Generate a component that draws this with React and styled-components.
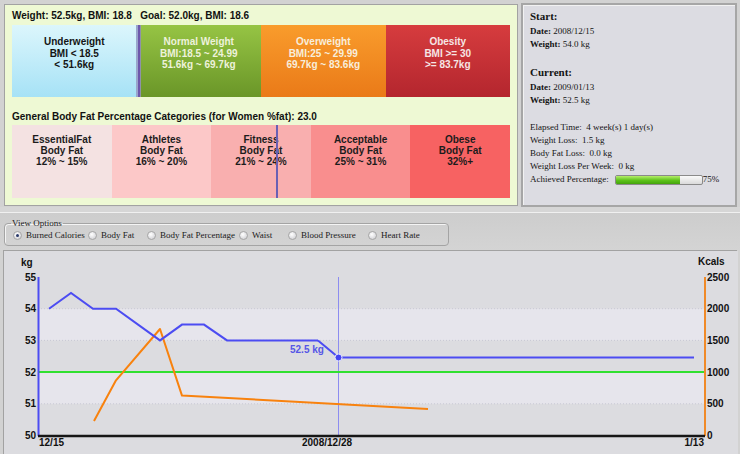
import React from 'react';
import styled, { createGlobalStyle } from 'styled-components';

const GlobalStyle = createGlobalStyle`
  body {
    margin: 0;
    background: #d2d2d2;
  }
`;

const Screen = styled.div`
  width: 740px;
  height: 454px;
  overflow: hidden;
  display: flex;
  flex-direction: column;
  background: #d2d2d2;
  font-family: 'Liberation Sans', Arial, sans-serif;
`;

const TopRow = styled.div`
  display: flex;
  gap: 3px;
  height: 207px;
  padding: 3px 3px 0 4px;
  box-sizing: border-box;
`;

const BmiPanel = styled.div`
  width: 514px;
  height: 202px;
  margin-top: 1px;
  box-sizing: border-box;
  border: 1px solid #a2a2a2;
  background: #eef9d4;
  padding: 5px 7px 0 7px;
  display: flex;
  flex-direction: column;
`;

const PanelTitle = styled.div`
  font-size: 10px;
  font-weight: bold;
  line-height: 12px;
  color: #111;
  white-space: pre;
  margin-top: ${p => p.$top || 0}px;
`;

const ScaleBar = styled.div`
  position: relative;
  display: flex;
  width: 498px;
  height: ${p => p.$height}px;
  margin-top: ${p => p.$top}px;
`;

const Segment = styled.div`
  flex: 1;
  background: linear-gradient(to bottom, ${p => p.$from}, ${p => p.$to});
  color: ${p => p.$color};
  text-align: center;
  font-size: 10px;
  font-weight: bold;
  line-height: ${p => p.$lh}px;
  padding-top: ${p => p.$pad}px;
  box-sizing: border-box;
`;

const Marker = styled.div`
  position: absolute;
  top: 0;
  bottom: 0;
  left: ${p => p.$left}px;
  width: ${p => p.$width}px;
  background: ${p => p.$color};
`;

const StatsPanel = styled.div`
  width: 216px;
  height: 204px;
  box-sizing: border-box;
  border: 2px solid #a6a6a6;
  box-shadow: inset 1px 1px 0 #f2f2f2;
  background: #dcdce2;
  padding: 4px 0 0 7px;
  font-family: 'Liberation Serif', 'Times New Roman', serif;
  font-size: 9px;
  color: #141414;
`;

const StatHead = styled.div`
  font-size: 11px;
  font-weight: bold;
  line-height: 14px;
  margin-top: ${p => p.$top || 0}px;
`;

const StatLine = styled.div`
  display: flex;
  align-items: center;
  line-height: 13px;
  height: 13px;
  white-space: pre;
  margin-top: ${p => p.$top || 0}px;
  b {
    font-weight: bold;
  }
`;

const Progress = styled.div`
  width: 86px;
  height: 8px;
  margin-left: 6px;
  border: 1px solid #8a8a8a;
  border-radius: 2px;
  background: linear-gradient(to bottom, #fafafa, #dadada);
  overflow: hidden;
`;

const ProgressFill = styled.div`
  height: 100%;
  background: linear-gradient(to bottom, #b6ee6a, #5cc21a 55%, #44a40c);
`;

const MidBand = styled.div`
  height: 43px;
  box-sizing: border-box;
  padding: 11px 0 0 4px;
  background: linear-gradient(to bottom, #d6d6d6 0, #d6d6d6 5px, #f0f0f0 5px, #f0f0f0 6px, #cdcdcd 6px, #d4d4d4 100%);
`;

const Options = styled.fieldset`
  width: 445px;
  box-sizing: border-box;
  margin: 0;
  padding: 1px 0 4px 8px;
  border: 1px solid #a4a4a4;
  border-radius: 4px;
  box-shadow: inset 1px 1px 0 #f4f4f4;
  display: flex;
  font-family: 'Liberation Serif', 'Times New Roman', serif;
  font-size: 9px;
  color: #1a1a1a;
`;

const OptionsLegend = styled.legend`
  padding: 0 1px;
  margin-left: -2px;
  line-height: 10px;
`;

const RadioItem = styled.label`
  display: flex;
  align-items: center;
  gap: 4px;
  width: ${p => p.$width}px;
  height: 12px;
  line-height: 12px;
  white-space: nowrap;
`;

const RadioDot = styled.span`
  position: relative;
  width: 9px;
  height: 9px;
  box-sizing: border-box;
  border-radius: 50%;
  border: 1px solid #a6a6a6;
  background: radial-gradient(circle at 40% 35%, #ffffff, #d4d4d8 80%);
  &::after {
    content: '';
    display: ${p => (p.$checked ? 'block' : 'none')};
    position: absolute;
    left: 2px;
    top: 2px;
    width: 3px;
    height: 3px;
    border-radius: 50%;
    background: #2a3a6a;
  }
`;

const ChartPanel = styled.div`
  height: 204px;
  margin: 0 3px;
  box-sizing: border-box;
  border: 1px solid #a2a2a2;
  border-bottom: none;
  background: #dcdce0;
  svg {
    display: block;
  }
  text {
    font-family: 'Liberation Sans', Arial, sans-serif;
    font-size: 10px;
    font-weight: bold;
  }
`;

const bmiSegments = [
  { lines: ['Underweight', 'BMI < 18.5', '< 51.6kg'], from: '#dcf6fc', to: '#a6e2f6', color: '#141414' },
  { lines: ['Normal Weight', 'BMI:18.5 ~ 24.99', '51.6kg ~ 69.7kg'], from: '#96c444', to: '#6a9628', color: '#eef2dc' },
  { lines: ['Overweight', 'BMI:25 ~ 29.99', '69.7kg ~ 83.6kg'], from: '#f99c2c', to: '#ea7a18', color: '#f8eedc' },
  { lines: ['Obesity', 'BMI >= 30', '>= 83.7kg'], from: '#d63c3e', to: '#b4262e', color: '#f6e6e6' },
];

const fatSegments = [
  { lines: ['EssentialFat', 'Body Fat', '12% ~ 15%'], bg: '#f4e2e2' },
  { lines: ['Athletes', 'Body Fat', '16% ~ 20%'], bg: '#fcc8c8' },
  { lines: ['Fitness', 'Body Fat', '21% ~ 24%'], bg: '#f9afaf' },
  { lines: ['Acceptable', 'Body Fat', '25% ~ 31%'], bg: '#f98e8e' },
  { lines: ['Obese', 'Body Fat', '32%+'], bg: '#f76262' },
];

const viewOptions = [
  { label: 'Burned Calories', width: 75, checked: true },
  { label: 'Body Fat', width: 59 },
  { label: 'Body Fat Percentage', width: 92 },
  { label: 'Waist', width: 49 },
  { label: 'Blood Pressure', width: 80 },
  { label: 'Heart Rate', width: 70 },
];

const kgY = v => 435.5 - (v - 50) * 31.7;
const kcalY = v => 435.5 - (v / 500) * 31.7;

const weightPts = [
  [48, 54], [70, 54.5], [92, 54], [115, 54], [159, 53], [181, 53.5],
  [203, 53.5], [226, 53], [317, 53],
];
const caloriePts = [[93, 230], [115, 870], [159, 1680], [181, 630], [427, 420]];

const toPath = (pts, fy) => pts.map(([x, v], i) => `${i ? 'L' : 'M'}${x} ${fy(v).toFixed(1)}`).join(' ');

function Chart() {
  const kgTicks = [55, 54, 53, 52, 51, 50];
  const kcalTicks = [2500, 2000, 1500, 1000, 500, 0];
  return (
    <svg width="734" height="203" viewBox="3 251 734 203">
      <rect x="3" y="251" width="734" height="203" fill="#dcdce0" />
      <rect x="37" y={kgY(54)} width="666" height={kgY(53) - kgY(54)} fill="#e6e5ec" />
      <rect x="37" y={kgY(52)} width="666" height={kgY(51) - kgY(52)} fill="#e6e5ec" />
      {[54, 53, 52, 51].map(v => (
        <line key={v} x1="37" x2="703" y1={kgY(v)} y2={kgY(v)} stroke="#c8c8d4" strokeDasharray="1 2" />
      ))}

      <text x="20" y="266" fill="#111">kg</text>
      <text x="697" y="265" fill="#111">Kcals</text>
      {kgTicks.map(v => (
        <text key={v} x="35" y={kgY(v) + 3.5} textAnchor="end" fill="#111">{v}</text>
      ))}
      {kcalTicks.map(v => (
        <text key={v} x="706" y={kcalY(v) + 3.5} fill="#111">{v}</text>
      ))}
      <text x="38" y="446" fill="#111">12/15</text>
      <text x="301" y="446" fill="#111">2008/12/28</text>
      <text x="703" y="446" textAnchor="end" fill="#111">1/13</text>

      <line x1="337.5" x2="337.5" y1="277" y2="435" stroke="#8c8cf0" strokeWidth="1" />
      <line x1="37" x2="703" y1={kgY(52)} y2={kgY(52)} stroke="#30e030" strokeWidth="2" />

      <path d={toPath(caloriePts, kcalY)} fill="none" stroke="#f8820e" strokeWidth="2" strokeLinejoin="round" />
      <path d={toPath(weightPts, kgY)} fill="none" stroke="#4c4cf2" strokeWidth="2" />
      <path d={`M317 ${kgY(53)} L337.5 357.5 L693 357.5`} fill="none" stroke="#4c4cf2" strokeWidth="2" />
      <text x="289" y="353" fill="#5656e6">52.5 kg</text>
      <circle cx="337.5" cy="357.5" r="3.5" fill="#4444f0" stroke="#e8e8ff" strokeWidth="1" />

      <line x1="37.5" x2="37.5" y1="277" y2="436" stroke="#4c4cf2" strokeWidth="2" />
      <line x1="704" x2="704" y1="277" y2="436" stroke="#f08a28" strokeWidth="2" />
      <line x1="37" x2="704" y1="436" y2="436" stroke="#161616" strokeWidth="2.5" />
    </svg>
  );
}

export default function App() {
  return (
    <Screen>
      <GlobalStyle />
      <TopRow>
        <BmiPanel>
          <PanelTitle>Weight: 52.5kg, BMI: 18.8   Goal: 52.0kg, BMI: 18.6</PanelTitle>
          <ScaleBar $height={72} $top={3}>
            {bmiSegments.map(s => (
              <Segment key={s.lines[0]} $from={s.from} $to={s.to} $color={s.color} $lh={11.5} $pad={11}>
                {s.lines.map(l => <div key={l}>{l}</div>)}
              </Segment>
            ))}
            <Marker $left={124} $width={2} $color="#9aa6cc" />
            <Marker $left={126} $width={2} $color="#6e58ac" />
            <Marker $left={128} $width={1} $color="#8f93a8" />
          </ScaleBar>
          <PanelTitle $top={14}>General Body Fat Percentage Categories (for Women %fat): 23.0</PanelTitle>
          <ScaleBar $height={73} $top={2}>
            {fatSegments.map(s => (
              <Segment key={s.lines[0]} $from={s.bg} $to={s.bg} $color="#1c1c1c" $lh={11} $pad={9}>
                {s.lines.map(l => <div key={l}>{l}</div>)}
              </Segment>
            ))}
            <Marker $left={264} $width={2} $color="#6a60b4" />
          </ScaleBar>
        </BmiPanel>

        <StatsPanel>
          <StatHead>Start:</StatHead>
          <StatLine $top={2}><b>Date: </b>2008/12/15</StatLine>
          <StatLine><b>Weight: </b>54.0 kg</StatLine>
          <StatHead $top={14}>Current:</StatHead>
          <StatLine $top={2}><b>Date: </b>2009/01/13</StatLine>
          <StatLine><b>Weight: </b>52.5 kg</StatLine>
          <StatLine $top={14}>Elapsed Time:  4 week(s) 1 day(s)</StatLine>
          <StatLine>Weight Loss:  1.5 kg</StatLine>
          <StatLine>Body Fat Loss:  0.0 kg</StatLine>
          <StatLine>Weight Loss Per Week:  0 kg</StatLine>
          <StatLine>
            Achieved Percentage:
            <Progress>
              <ProgressFill style={{ width: '75%' }} />
            </Progress>
            75%
          </StatLine>
        </StatsPanel>
      </TopRow>

      <MidBand>
        <Options>
          <OptionsLegend>View Options</OptionsLegend>
          {viewOptions.map(o => (
            <RadioItem key={o.label} $width={o.width}>
              <RadioDot $checked={o.checked} />
              {o.label}
            </RadioItem>
          ))}
        </Options>
      </MidBand>

      <ChartPanel>
        <Chart />
      </ChartPanel>
    </Screen>
  );
}
